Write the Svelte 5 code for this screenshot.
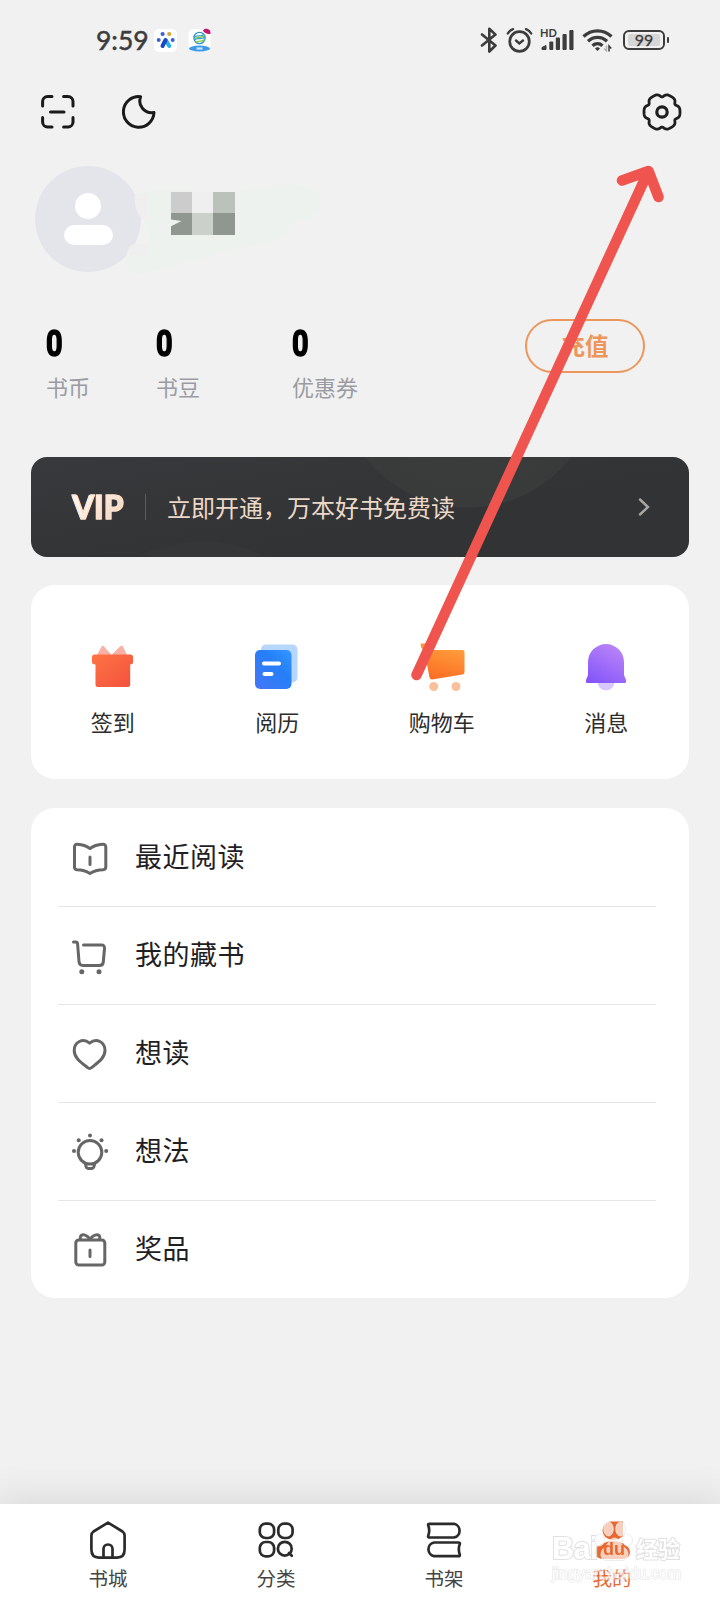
<script lang="ts">
type Stat = { value: number; label: string; width: number };

const stats: Stat[] = [
	{ value: 0, label: '书币', width: 110 },
	{ value: 0, label: '书豆', width: 136 },
	{ value: 0, label: '优惠券', width: 130 },
];

const shortcuts = [
	{ id: 'gift', label: '签到' },
	{ id: 'notes', label: '阅历' },
	{ id: 'cart', label: '购物车' },
	{ id: 'bell', label: '消息' },
];

const rows = [
	{ id: 'book', label: '最近阅读' },
	{ id: 'cart', label: '我的藏书' },
	{ id: 'heart', label: '想读' },
	{ id: 'bulb', label: '想法' },
	{ id: 'prize', label: '奖品' },
];

const tabs = [
	{ id: 'home', label: '书城' },
	{ id: 'category', label: '分类' },
	{ id: 'shelf', label: '书架' },
	{ id: 'mine', label: '我的' },
];

const active = 'mine';

// six rounded teeth with narrow notches between them
const gearPath = (): string => {
	const points: string[] = [];
	for (let deg = 0; deg < 360; deg += 3) {
		const a = (deg * Math.PI) / 180;
		const r = 18 - 3 * Math.pow((1 - Math.cos(6 * a)) / 2, 3.6);
		points.push(`${(20 + r * Math.cos(a)).toFixed(2)} ${(20 + r * Math.sin(a)).toFixed(2)}`);
	}
	return `M${points.join('L')}Z`;
};
</script>

<div class="page">
	<header class="status">
		<span class="time">9:59</span>
		<svg class="app-one" width="23" height="23" viewBox="0 0 23 23">
			<rect width="23" height="23" rx="5" fill="#fff" />
			<circle cx="8.6" cy="5" r="2.1" fill="#3a62d0" />
			<circle cx="15.2" cy="5" r="2.1" fill="#d6a53c" />
			<circle cx="4.7" cy="11" r="2" fill="#3a62d0" />
			<circle cx="18.7" cy="11" r="2" fill="#3a62d0" />
			<path d="M12 11.5L15.3 17" stroke="#28aee8" stroke-width="4" stroke-linecap="round" />
			<path d="M11.5 11L8.500 17" stroke="#1b49c4" stroke-width="4" stroke-linecap="round" />
		</svg>
		<svg class="app-two" width="24" height="24" viewBox="0 0 24 24">
			<rect x="0.5" y="1" width="22" height="22" rx="5" fill="#fff" />
			<circle cx="11.5" cy="10" r="5.6" fill="#fff" stroke="#2f92cf" stroke-width="1.400" />
			<path d="M6.500 9.500C9 6 12 10 16 6.200M6.500 12C10 8.500 13 13 17 8.800" fill="none" stroke="#3a9fce" stroke-width="1.300" />
			<path d="M7 11C10 7.500 12 11.500 16.500 7.500M8 14.500C11 11.500 13.500 15 16.500 11.500" fill="none" stroke="#7cc843" stroke-width="1.300" />
			<path d="M15 2.500C16 0 20 0 22 2.500Q22.500 4 22.500 6C19 6.500 16 5 15 2.500Z" fill="#c9146c" />
			<ellipse cx="11.500" cy="20.500" rx="10.500" ry="3" fill="#3c9ae8" />
			<path d="M8.500 20.500H14.500" stroke="#c9e4fb" stroke-width="2.200" />
		</svg>
		<div class="status-right">
			<svg width="18" height="26" viewBox="0 0 18 26" fill="none" stroke="#3c3c3c" stroke-width="2.600" stroke-linejoin="round" stroke-linecap="round">
				<path d="M2 7.500L15.500 18.500L9.300 24.500V1.800L15.500 7.600L2 18.500" />
			</svg>
			<svg class="alarm" width="27" height="26" viewBox="0 0 27 26" fill="none" stroke="#3c3c3c" stroke-width="2.400" stroke-linecap="round">
				<circle cx="13.500" cy="14.500" r="9.800" stroke-width="2.700" />
				<path d="M10 13.500L13.300 16.500L17 13.500" />
				<path d="M1.800 6.500Q3.500 3.500 7 2.200M20 2.200Q23.500 3.500 25.200 6.500" />
			</svg>
			<div class="signal">
				<span class="hd">HD</span>
				<svg width="34" height="22" viewBox="0 0 34 22" fill="#3c3c3c">
					<path d="M2 20.500V18.500L6 16.500V20.500Z" stroke="#3c3c3c" />
					<rect x="9.300" y="12.500" width="4" height="8.500" rx="1" />
					<rect x="15.800" y="8.500" width="4.200" height="12.500" rx="1" />
					<rect x="22.500" y="5" width="4.200" height="16" rx="1" />
					<rect x="29.300" y="1" width="4.200" height="20" rx="1" />
				</svg>
			</div>
			<svg class="wifi" width="31" height="24" viewBox="0 0 31 24" fill="none" stroke="#3c3c3c" stroke-width="3.300">
				<path d="M1.500 8.500C9.500 1 21.500 1 29.500 8.500" />
				<path d="M6 13.200C11.500 8 19.500 8 25 13.200" />
				<path d="M10.500 17.700C13.500 15 17.500 15 20.500 17.700" />
				<path d="M15.500 19.200A3 3 0 0 1 18 20.500L15.500 23L13 20.500A3 3 0 0 1 15.500 19.200Z" fill="#3c3c3c" stroke="none" />
				<path d="M24.500 17.500V23L22 20.500" stroke="#b5b5b5" stroke-width="1.500" />
				<path d="M27 23.500V18L29.300 20.500" stroke-width="1.500" />
			</svg>
			<div class="battery"><span>99</span></div>
			<i class="nub"></i>
		</div>
	</header>

	<div class="toolbar">
		<svg width="34" height="34" viewBox="0 0 34 34" fill="none" stroke="#1a1a1a" stroke-width="3" stroke-linecap="round">
			<path d="M1.600 11V6.600A5 5 0 0 1 6.600 1.600H11M22.600 1.600H27A5 5 0 0 1 32 6.600V11M32 22.500V27A5 5 0 0 1 27 32H22.600M11 32H6.600A5 5 0 0 1 1.600 27V22.500" />
			<path d="M9.500 17H23" />
		</svg>
		<svg class="moon" width="34" height="34" viewBox="0 0 34 34" fill="none" stroke="#1a1a1a" stroke-width="3" stroke-linejoin="round">
			<path d="M18.600 1.700C15.500 10 22 18.800 32 17.500A15.300 15.300 0 1 1 18.600 1.700Z" />
		</svg>
		<svg class="gear" width="40" height="40" viewBox="0 0 40 40" fill="none" stroke="#1f1f1f" stroke-width="2.800" stroke-linejoin="round">
			<path d={gearPath()} />
			<circle cx="20" cy="20" r="5.200" stroke-width="3.200" />
		</svg>
	</div>

	<section class="profile">
		<div class="avatar">
			<i class="head"></i>
			<i class="shoulders"></i>
		</div>
		<svg class="smear" width="200" height="96" viewBox="0 0 200 96">
			<path d="M12 9Q40 3 80 8Q130 8 148 1Q185 -2 194 10Q198 26 184 34Q164 38 158 52Q150 60 104 66L50 82L18 90Q4 90 0 80L2 68L24 60V44Q12 36 12 9Z" fill="#eef2ee" />
			<path d="M10 10H22V35H17Q8 26 10 10ZM4 63L8 60H22V71H2Z" fill="#f1eeef" />
		</svg>
		<div class="mosaic">
			<i class="c1"></i><i class="c2"></i><i class="c3"></i>
			<i class="c4 notched"></i><i class="c5"></i><i class="c4"></i>
		</div>
	</section>

	<section class="stats">
		{#each stats as s (s.label)}
			<div class="stat" style="width: {s.width}px">
				<span class="value">{s.value}</span>
				<span class="label">{s.label}</span>
			</div>
		{/each}
		<button class="recharge">充值</button>
	</section>

	<section class="vip">
		<span class="vip-logo">VIP</span>
		<i class="vip-line"></i>
		<span class="vip-text">立即开通，万本好书免费读</span>
		<svg width="12" height="20" viewBox="0 0 12 20" fill="none" stroke="#aaa6a3" stroke-width="2.400" stroke-linecap="round">
			<path d="M2 2.500L10 10L2 17.500" />
		</svg>
	</section>

	<section class="shortcuts">
		{#each shortcuts as s (s.id)}
			<div class="shortcut">
				<svg width="48" height="48" viewBox="0 0 48 48">
					{#if s.id === 'gift'}
						<defs>
							<linearGradient id="g-gift" x1="0" y1="0" x2="1" y2="1">
								<stop offset="0" stop-color="#ff7445" /><stop offset="1" stop-color="#f2513c" />
							</linearGradient>
						</defs>
						<path d="M7.500 13L12.500 3.500Q13.500 2 15 3.500L22.500 12L31 3.500Q33 2 34 3.500L38.500 13Z" fill="#fab0a5" />
						<path d="M5.500 11.500H41.500Q44 11.500 44 14V19Q44 21.500 41.200 21.500V42Q41.200 44 39 44H9Q6.500 44 6.500 42V21.500Q3 21.500 3 19V14Q3 11.500 5.500 11.500Z" fill="url(#g-gift)" />
					{:else if s.id === 'notes'}
						<defs>
							<linearGradient id="g-notes" x1="0" y1="1" x2="1" y2="0">
								<stop offset="0" stop-color="#4576f5" /><stop offset="0.600" stop-color="#257ff8" /><stop offset="1" stop-color="#3297ff" />
							</linearGradient>
						</defs>
						<rect x="8" y="1.500" width="36.500" height="38" rx="5" fill="#b7d6fc" />
						<rect x="2" y="7" width="36.500" height="39" rx="5" fill="url(#g-notes)" />
						<path d="M11 20.500H26M11.500 31H18.500" stroke="#fff" stroke-width="4" stroke-linecap="round" />
					{:else if s.id === 'cart'}
						<defs>
							<linearGradient id="g-cart" x1="0.400" y1="1" x2="0.700" y2="0">
								<stop offset="0" stop-color="#fb6e24" /><stop offset="1" stop-color="#ffa13d" />
							</linearGradient>
						</defs>
						<path d="M2.800 0.500H13L15.500 7H44.500Q46.500 7 46.500 9V29Q46.500 31 44.500 31.500L14 36.500Q12 36.500 11.500 34.500L6 6H4.500Q2.800 5 2.800 3Z" fill="url(#g-cart)" />
						<circle cx="15.700" cy="43.500" r="4.500" fill="#fac09b" />
						<circle cx="38" cy="43.500" r="4.500" fill="#fac09b" />
					{:else}
						<defs>
							<linearGradient id="g-bell" x1="0.200" y1="1" x2="0.800" y2="0">
								<stop offset="0" stop-color="#8456fb" /><stop offset="1" stop-color="#bd86f6" />
							</linearGradient>
						</defs>
						<path d="M15.500 39H32.500A8.500 8.500 0 0 1 15.500 39Z" fill="#d9c8fb" />
						<path d="M6 19A18 18 0 0 1 42 19V32L44 37V39Q44 40 43 40H5Q4 40 4 39V37L6 32Z" fill="url(#g-bell)" />
					{/if}
				</svg>
				<span>{s.label}</span>
			</div>
		{/each}
	</section>

	<section class="list">
		{#each rows as r (r.id)}
			<div class="row">
				<svg width="38" height="38" viewBox="0 0 38 38" fill="none" stroke="#666" stroke-width="3" stroke-linecap="round" stroke-linejoin="round">
					{#if r.id === 'book'}
						<path d="M19 9.500C15.500 6.800 12 5.500 6.500 5.200Q3.500 5 3.500 8V28Q3.500 30.500 6 30.800C12 31 15 32 19 34.500C23 32 26 31 32 30.800Q34.800 30.500 34.800 28V8Q34.800 5 31.500 5.200C26 5.500 22.500 6.800 19 9.500Z" />
						<path d="M19 18V25.500" />
					{:else if r.id === 'cart'}
						<path d="M2.500 5H4.500Q6.500 5 6.600 7L8 24.500Q8.300 28.500 12 28.500H28.500Q32 28.500 32.300 25L33.500 11.500Q33.700 8 30.500 8H12.500" />
						<circle cx="10.800" cy="34.800" r="2.500" fill="#666" stroke="none" />
						<circle cx="28" cy="34.800" r="2.500" fill="#666" stroke="none" />
					{:else if r.id === 'heart'}
						<path d="M18.600 8.200C12 2.500 3.200 7 3.200 15.500C3.200 23 10 27.500 16.500 32.500Q18.600 34.500 20.700 32.500C27 27.500 34 23 34 15.500C34 7 25.500 2.500 18.600 8.200Z" />
					{:else if r.id === 'bulb'}
						<circle cx="19" cy="19.300" r="11.800" />
						<path d="M14.300 30.500L15 33.500Q15.500 35.500 17.500 35.500H20.500Q22.500 35.500 23 33.500L23.700 30.500" />
						<g fill="#666" stroke="none">
							<circle cx="19" cy="2.400" r="2" />
							<circle cx="7.700" cy="7.200" r="2" />
							<circle cx="30.500" cy="7.200" r="2" />
							<circle cx="3" cy="18" r="2" />
							<circle cx="35.200" cy="18" r="2" />
						</g>
					{:else}
						<rect x="4.800" y="9" width="29" height="25" rx="3" />
						<path d="M9.500 8.500C8 2 15 2.500 19 8.500C23 2.500 30.500 2 28.500 8.500M19 19V25.500" />
					{/if}
				</svg>
				<span>{r.label}</span>
			</div>
		{/each}
	</section>

	<nav class="tabs">
		{#each tabs as t (t.id)}
			<div class="tab" class:active={t.id === active}>
				<svg width="40" height="40" viewBox="0 0 40 40" fill="none" stroke="#2b2b2b" stroke-width="2.700" stroke-linecap="round" stroke-linejoin="round">
					{#if t.id === 'home'}
						<path d="M20 3.600L34.500 12.500Q36.600 14 36.600 16.500V30.500Q36.600 38.600 29 38.600H11Q3.400 38.600 3.400 30.500V16.500Q3.400 14 5.500 12.500Z" />
						<path d="M15.500 38.500V30A4.500 4.500 0 0 1 24.500 30V38.500" />
					{:else if t.id === 'category'}
						<rect x="3.800" y="4.700" width="14.300" height="14.300" rx="5.800" />
						<rect x="22.300" y="4.700" width="14.300" height="14.300" rx="5.800" />
						<rect x="3.800" y="23" width="14.300" height="14.300" rx="5.800" />
						<circle cx="28.800" cy="29.700" r="6.900" />
						<path d="M33 34L35.800 36.800" />
					{:else if t.id === 'shelf'}
						<path d="M5.500 4.800H30A7 7 0 0 1 30 18.500H5.500Q3.800 18.500 4.200 17Q6.200 11.500 4.200 6.300Q3.800 4.800 5.500 4.800Z" />
						<path d="M34.500 23.500H10A7 7 0 0 0 10 37.200H34.500Q36.200 37.200 35.800 35.700Q33.800 30 35.800 25Q36.200 23.500 34.500 23.500Z" />
					{:else}
						<g fill="#e9682f" stroke="none">
							<path d="M18 2.500H31V17Q27 21 20 21Q11 19.500 10.500 11.500Q11 4.500 18 2.500Z" />
							<path d="M12 24Q20 20 30 24Q38 27 38 34Q37 40 29 40H12Q3 40 3 33Q3 27 12 24Z" />
						</g>
					{/if}
				</svg>
				<span>{t.label}</span>
			</div>
		{/each}

		<div class="watermark">
			<div class="brand">
				<span class="bai">Bai</span>
				<svg width="44" height="46" viewBox="0 0 44 46" fill="#fff" fill-opacity="0.800" stroke="#dedede" stroke-width="1">
					<ellipse cx="16.500" cy="11" rx="4.800" ry="7" />
					<ellipse cx="28.500" cy="11" rx="4.800" ry="7" />
					<ellipse cx="7.500" cy="22" rx="4.800" ry="6" />
					<ellipse cx="35.500" cy="22" rx="4.800" ry="6" />
					<path d="M22.500 20C27 20 29 27 34 31C38 35 36 43 29 42.500H16C9 43 7 36 11 31C16 27 17.500 20 22.500 20Z" />
				</svg>
				<span class="du">du</span>
				<span class="jy">经验</span>
			</div>
			<div class="url">jingyan.baidu.com</div>
		</div>
	</nav>

	<svg class="pointer" width="720" height="700" viewBox="0 0 720 700" fill="none" stroke="#f0544e" stroke-width="10.500" stroke-linecap="round" stroke-linejoin="round">
		<path d="M416.500 675L648.500 171M622 180.500L648.500 171L658.500 197" />
	</svg>
</div>

<style>
:global(body) {
	margin: 0;
	background: #f1f1f1;
}

.page {
	position: relative;
	box-sizing: border-box;
	width: 720px;
	height: 1600px;
	display: flex;
	flex-direction: column;
	overflow: hidden;
	background: #f1f1f1;
	font-family: 'Noto Sans CJK SC', sans-serif;
}

svg {
	display: block;
	flex: none;
}

i {
	display: block;
}

.status {
	box-sizing: border-box;
	height: 80px;
	padding: 0 51px 0 96px;
	display: flex;
	align-items: center;
	color: #3c3c3c;
}

.time {
	width: 58px;
	font-family: Lato, sans-serif;
	font-size: 26.500px;
	font-weight: 400;
	line-height: 30px;
	-webkit-text-stroke: 0.500px #3c3c3c;
}

.app-two {
	margin-left: 11px;
}

.status-right {
	margin-left: auto;
	display: flex;
	align-items: center;
}

.alarm {
	margin-left: 8px;
}

.signal {
	position: relative;
	margin-left: 7px;
}

.hd {
	position: absolute;
	left: 0;
	top: -2px;
	font-family: Lato, sans-serif;
	font-size: 11px;
	line-height: 11px;
	font-weight: 700;
}

.wifi {
	margin-left: 8px;
}

.battery {
	box-sizing: border-box;
	width: 42px;
	height: 20px;
	margin-left: 10px;
	padding: 2px 3px;
	border: 2px solid #3c3c3c;
	border-radius: 6px;
}

.battery span {
	display: block;
	border-radius: 2px;
	background: #d6d6d6;
	font-family: Lato, sans-serif;
	font-size: 16px;
	line-height: 12px;
	font-weight: 400;
	text-align: center;
	-webkit-text-stroke: 0.300px #3c3c3c;
}

.nub {
	width: 2px;
	height: 6px;
	margin-left: 2px;
	border-radius: 1px;
	background: #3c3c3c;
}

.toolbar {
	height: 64px;
	padding: 0 38px 0 41px;
	display: flex;
	align-items: center;
}

.moon {
	margin-left: 47px;
}

.gear {
	margin-left: auto;
}

.profile {
	position: relative;
	height: 107px;
	margin-top: 22px;
	padding-left: 35px;
	display: flex;
}

.avatar {
	width: 106px;
	height: 106px;
	border-radius: 50%;
	background: #e4e5eb;
	display: flex;
	flex-direction: column;
	align-items: center;
}

.head {
	width: 26px;
	height: 26px;
	margin-top: 27px;
	border-radius: 50%;
	background: #fff;
}

.shoulders {
	width: 49px;
	height: 20px;
	margin-top: 6px;
	border-radius: 10px;
	background: #fff;
}

.smear {
	position: absolute;
	left: 125px;
	top: 18px;
}

.mosaic {
	position: relative;
	width: 64px;
	height: 43px;
	margin: 26px 0 0 30px;
	display: grid;
	grid-template-columns: 21px 21px 22px;
	grid-template-rows: 21px 22px;
}

.c1 { background: #cccccc; }
.c2 { background: #eeefee; }
.c3 { background: #bbc2bb; }
.c4 { background: #909690; }
.c5 { background: #cbd1ca; }

.notched {
	clip-path: polygon(0 0, 100% 0, 100% 100%, 0 100%, 0 60%, 50% 36%, 0 30%);
}

.stats {
	height: 84px;
	margin-top: 46px;
	padding-left: 46px;
	display: flex;
	align-items: flex-start;
}

.stat {
	padding-top: 5px;
	display: flex;
	flex-direction: column;
	gap: 7px;
}

.value {
	width: 22px;
	font-family: Roboto, sans-serif;
	font-size: 37px;
	font-weight: 700;
	line-height: 40px;
	color: #000;
	transform: scaleX(0.780);
	transform-origin: left;
	-webkit-text-stroke: 1.500px #000;
}

.label {
	font-size: 22px;
	line-height: 30px;
	color: #9b9ca3;
}

.recharge {
	box-sizing: border-box;
	width: 120px;
	height: 54px;
	margin-left: 103px;
	padding: 0;
	border: 2px solid #ec965c;
	border-radius: 27px;
	background: none;
	color: #ec965c;
	font-family: inherit;
	font-size: 23.500px;
	font-weight: 700;
	line-height: 48px;
}

.recharge {
	padding-bottom: 2px;
}

.vip {
	box-sizing: border-box;
	height: 100px;
	margin: 54px 31px 0;
	padding: 0 39px 0 41px;
	display: flex;
	align-items: center;
	border-radius: 16px;
	background:
		radial-gradient(circle at 437px -80px, #3b3c3c 0, #393a3a 130px, transparent 131px),
		radial-gradient(circle at 170px 225px, #353637 0, #353637 140px, transparent 141px),
		linear-gradient(170deg, #37393c, #323334 60%);
}

.vip-logo {
	width: 73px;
	font-family: Lato, sans-serif;
	font-size: 31.500px;
	font-weight: 900;
	line-height: 40px;
	background: linear-gradient(135deg, #fff5ea 20%, #f6d7bf 65%);
	background-clip: text;
	-webkit-background-clip: text;
	color: transparent;
	-webkit-text-stroke: 1px #fbe6d5;
}

.vip-line {
	width: 1px;
	height: 26px;
	margin-right: 21px;
	background: #5c5d5e;
}

.vip-text {
	flex: 1;
	padding-bottom: 1px;
	font-size: 24px;
	line-height: 32px;
	color: #ecd8c9;
}

.shortcuts {
	height: 194px;
	margin: 28px 31px 0;
	display: grid;
	grid-template-columns: repeat(4, 1fr);
	border-radius: 24px;
	background: #fff;
}

.shortcut {
	padding: 58px 1px 0 0;
	display: flex;
	flex-direction: column;
	align-items: center;
	gap: 15px;
	font-size: 22px;
	line-height: 30px;
	color: #2c2c2c;
}

.list {
	height: 490px;
	margin: 29px 31px 0;
	border-radius: 24px;
	background: #fff;
}

.row {
	box-sizing: border-box;
	height: 98px;
	margin: 0 33px 0 27px;
	padding-left: 13px;
	display: flex;
	align-items: center;
	gap: 26px;
	border-top: 1px solid #e6e6e6;
	font-size: 27px;
	letter-spacing: 0.500px;
	line-height: 40px;
	color: #1f2024;
}

.row span {
	padding-bottom: 3px;
}

.row:first-child {
	border-top-color: transparent;
}

.tabs {
	position: relative;
	box-sizing: border-box;
	height: 96px;
	margin-top: auto;
	padding: 15px 24px 0;
	display: grid;
	grid-template-columns: repeat(4, 1fr);
	background: #fff;
	box-shadow: 0 0 36px 8px rgba(0, 0, 0, 0.090);
}

.tab {
	display: flex;
	flex-direction: column;
	align-items: center;
	gap: 5px;
	font-size: 19.500px;
	line-height: 28px;
	color: #444;
}

.tab.active {
	color: #e9682f;
}

.watermark {
	position: absolute;
	left: 552px;
	top: 14px;
	width: 132px;
	height: 70px;
	color: #fff;
	opacity: 0.850;
	-webkit-text-stroke: 2px #dcdcdc;
	paint-order: stroke fill;
}

.brand {
	display: flex;
	height: 46px;
	align-items: flex-end;
}

.brand svg {
	margin-left: -4px;
}

.bai {
	width: 44px;
	font-family: 'Liberation Sans', sans-serif;
	font-size: 31px;
	font-weight: 700;
	line-height: 30px;
	letter-spacing: -1px;
}

.du {
	position: absolute;
	left: 51px;
	top: 21px;
	font-family: 'Liberation Sans', sans-serif;
	font-size: 18px;
	line-height: 20px;
	font-weight: 700;
	color: #e9682f;
	-webkit-text-stroke: 0;
}

.jy {
	font-size: 22px;
	font-weight: 700;
	line-height: 34px;
}

.url {
	font-family: 'Liberation Sans', sans-serif;
	font-size: 16px;
	line-height: 20px;
	opacity: 0.700;
	-webkit-text-stroke: 1.500px #dcdcdc;
}

.pointer {
	position: absolute;
	left: 0;
	top: 0;
	pointer-events: none;
}
</style>
